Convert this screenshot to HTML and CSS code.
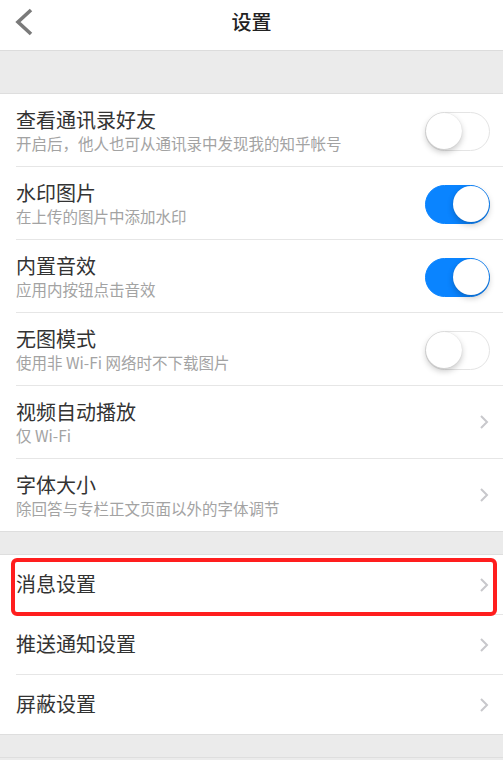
FILE: index.html
```html
<!DOCTYPE html>
<html lang="zh-CN">
<head>
<meta charset="utf-8">
<title>设置</title>
<link rel="stylesheet" href="styles.css">
</head>
<body>
<div class="page">
  <header class="nav">
    <svg class="back" width="24" height="30" viewBox="0 0 24 30"><polyline points="18,3 5,15 18,27" fill="none" stroke="#7a7a7a" stroke-width="3.6" stroke-linecap="butt" stroke-linejoin="miter"/></svg>
    <h1 class="nav-title">设置</h1>
  </header>
  <div class="gap gap-top"></div>
  <section class="group">
    <div class="row row-two">
      <div class="text"><div class="title">查看通讯录好友</div><div class="sub">开启后，他人也可从通讯录中发现我的知乎帐号</div></div>
      <span class="switch"><span class="knob"></span></span>
    </div>
    <div class="row row-two">
      <div class="text"><div class="title">水印图片</div><div class="sub">在上传的图片中添加水印</div></div>
      <span class="switch on"><span class="knob"></span></span>
    </div>
    <div class="row row-two">
      <div class="text"><div class="title">内置音效</div><div class="sub">应用内按钮点击音效</div></div>
      <span class="switch on"><span class="knob"></span></span>
    </div>
    <div class="row row-two">
      <div class="text"><div class="title">无图模式</div><div class="sub">使用非 Wi-Fi 网络时不下载图片</div></div>
      <span class="switch"><span class="knob"></span></span>
    </div>
    <div class="row row-two">
      <div class="text"><div class="title">视频自动播放</div><div class="sub">仅 Wi-Fi</div></div>
      <svg class="chev" width="10" height="16" viewBox="0 0 10 16"><polyline points="2,2 8,8 2,14" fill="none" stroke="#c8c8cc" stroke-width="2"/></svg>
    </div>
    <div class="row row-two">
      <div class="text"><div class="title">字体大小</div><div class="sub">除回答与专栏正文页面以外的字体调节</div></div>
      <svg class="chev" width="10" height="16" viewBox="0 0 10 16"><polyline points="2,2 8,8 2,14" fill="none" stroke="#c8c8cc" stroke-width="2"/></svg>
    </div>
  </section>
  <div class="gap gap-mid"></div>
  <section class="group">
    <div class="row row-one highlighted">
      <div class="title">消息设置</div>
      <svg class="chev" width="10" height="16" viewBox="0 0 10 16"><polyline points="2,2 8,8 2,14" fill="none" stroke="#c8c8cc" stroke-width="2"/></svg>
      <span class="mark"></span>
    </div>
    <div class="row row-one">
      <div class="title">推送通知设置</div>
      <svg class="chev" width="10" height="16" viewBox="0 0 10 16"><polyline points="2,2 8,8 2,14" fill="none" stroke="#c8c8cc" stroke-width="2"/></svg>
    </div>
    <div class="row row-one">
      <div class="title">屏蔽设置</div>
      <svg class="chev" width="10" height="16" viewBox="0 0 10 16"><polyline points="2,2 8,8 2,14" fill="none" stroke="#c8c8cc" stroke-width="2"/></svg>
    </div>
  </section>
  <div class="gap gap-bottom"></div>
</div>
</body>
</html>
```

FILE: styles.css
```css
html, body {
  margin: 0;
  padding: 0;
  background: #ebebeb;
}
body {
  font-family: "Noto Sans CJK SC", "Noto Sans", sans-serif;
  color: #333;
}
.page {
  width: 503px;
  height: 760px;
  overflow: hidden;
  background: #ebebeb;
}
.nav {
  height: 50px;
  background: #fff;
  border-bottom: 1px solid #dcdcdc;
  display: flex;
  align-items: center;
  justify-content: center;
  position: relative;
}
.back {
  position: absolute;
  left: 13px;
  top: 7px;
}
.nav-title {
  margin: 0;
  font-size: 20px;
  font-weight: 500;
  color: #222;
  line-height: 1;
  padding-bottom: 6px;
}
.gap-top { height: 42px; border-bottom: 1px solid #dedede; }
.gap-mid { height: 22px; border-top: 1px solid #dedede; border-bottom: 1px solid #dedede; }
.gap-bottom { height: 22px; border-top: 1px solid #dedede; border-bottom: 1px solid #dedede; }
.group {
  background: #fff;
}
.row {
  display: flex;
  align-items: center;
  justify-content: space-between;
  margin-left: 16px;
  padding-right: 13px;
  border-bottom: 1px solid #e6e6e6;
  position: relative;
}
.row:last-child { border-bottom: none; }
.row-two { height: 72px; }
.row-one { height: 59px; }
.text { display: flex; flex-direction: column; padding-top: 1px; }
.title {
  font-size: 20px;
  line-height: 26px;
  color: #333;
}
.sub {
  font-size: 15.5px;
  line-height: 21px;
  color: #a3a3a3;
}
.row-one .title { margin-top: -2px; }
.switch {
  width: 65px;
  height: 39px;
  border-radius: 20px;
  box-sizing: border-box;
  border: 1.5px solid #e4e4e4;
  background: #fff;
  position: relative;
  flex: none;
  margin-top: 3px;
}
.switch .knob {
  position: absolute;
  top: 0;
  left: 0;
  width: 36px;
  height: 36px;
  border-radius: 50%;
  background: #fff;
  box-shadow: 0 3px 6px rgba(0,0,0,0.22), 0 0 1px rgba(0,0,0,0.15);
}
.switch.on {
  background: #0a84ff;
  border-color: #0a84ff;
}
.switch.on .knob {
  left: auto;
  right: 0;
}
.chev { flex: none; margin-right: 1px; }
.mark {
  position: absolute;
  left: -5px;
  right: 6px;
  top: 3px;
  height: 58px;
  box-sizing: border-box;
  border: 4px solid #ff1e1e;
  border-radius: 6px;
  z-index: 2;
}
```
